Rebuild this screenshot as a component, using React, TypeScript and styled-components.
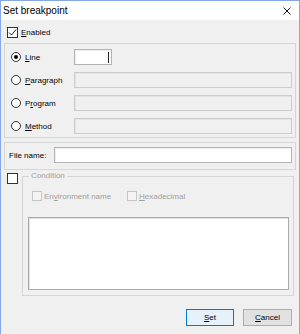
import styled, { createGlobalStyle } from 'styled-components'

const Global = createGlobalStyle`
  html, body {
    margin: 0;
    padding: 0;
    background: #f0f0f0;
  }
  body {
    font-family: "Liberation Sans", Arial, sans-serif;
    font-size: 8px;
    color: #000000;
  }
  * {
    box-sizing: border-box;
  }
`

const Window = styled.div`
  width: 300px;
  height: 334px;
  overflow: hidden;
  border: 1px solid #86a8e8;
  border-bottom: none;
  display: flex;
  flex-direction: column;
  background: #f0f0f0;
`

const TitleBar = styled.div`
  height: 19px;
  flex-shrink: 0;
  background: #ffffff;
  display: flex;
  align-items: center;
  justify-content: space-between;
  padding: 0 8px 0 2px;
  font-size: 10px;
`

const Client = styled.div`
  flex: 1;
  display: flex;
  flex-direction: column;
  padding: 7px 3px 0 3px;
`

const CheckRow = styled.label`
  display: flex;
  align-items: center;
  gap: 3px;
  height: 11px;
  padding-left: 3px;
`

const Box = styled.span<{ $size: number; $disabled?: boolean }>`
  width: ${(p) => p.$size}px;
  height: ${(p) => p.$size}px;
  flex-shrink: 0;
  border: 1px solid ${(p) => (p.$disabled ? '#c6c6c6' : '#333333')};
  background: ${(p) => (p.$disabled ? '#f4f4f4' : '#ffffff')};
  display: flex;
  align-items: center;
  justify-content: center;
`

const Group = styled.div`
  border: 1px solid #d5d5d5;
`

const RadioGroup = styled(Group)`
  margin-top: 5px;
  padding: 5px 3px 3px 6px;
  display: flex;
  flex-direction: column;
  gap: 7px;
`

const Row = styled.div`
  display: flex;
  align-items: center;
  height: 16px;
`

const RadioLabel = styled.label`
  width: 63px;
  flex-shrink: 0;
  display: flex;
  align-items: center;
  gap: 4px;
`

const Radio = styled.span<{ $on?: boolean }>`
  width: 10px;
  height: 10px;
  border-radius: 50%;
  border: 1px solid #333333;
  background: #ffffff;
  display: flex;
  align-items: center;
  justify-content: center;

  &::after {
    content: '';
    width: 4px;
    height: 4px;
    border-radius: 50%;
    background: ${(p) => (p.$on ? '#000000' : 'transparent')};
  }
`

const TextBox = styled.div<{ $width?: number; $disabled?: boolean }>`
  height: 16px;
  ${(p) => (p.$width ? `width: ${p.$width}px;` : 'flex: 1;')}
  border: 1px solid ${(p) => (p.$disabled ? '#cccccc' : '#b4b4b4')};
  box-shadow: inset 1px 1px 0 ${(p) => (p.$disabled ? '#e4e4e4' : '#eeeeee')};
  background: ${(p) => (p.$disabled ? '#f0f0f0' : '#ffffff')};
  display: flex;
  align-items: center;
  justify-content: flex-end;
  padding-right: 2px;
`

const Caret = styled.span`
  width: 1px;
  height: 11px;
  background: #222222;
`

const FileGroup = styled(Group)`
  margin-top: 4px;
  padding: 4px 3px 6px 4px;
  display: flex;
  align-items: center;
`

const FileLabel = styled.span`
  width: 45px;
  flex-shrink: 0;
`

const ConditionRow = styled.div`
  margin-top: 1px;
  display: flex;
  align-items: flex-start;
`

const ConditionCheck = styled.div`
  margin: 2px 4px 0 3px;
`

const Fieldset = styled.fieldset`
  flex: 1;
  margin: 0 2px 0 0;
  min-width: 0;
  height: 125px;
  border: 1px solid #d5d5d5;
  padding: 10px 4px 5px 5px;
  display: flex;
  flex-direction: column;
`

const Legend = styled.legend`
  margin-left: 1px;
  padding: 0 2px;
  line-height: 10px;
  color: #a0a0a0;
`

const Options = styled.div`
  display: flex;
  align-items: center;
  height: 10px;
  padding-left: 4px;
`

const Option = styled.label<{ $width?: number }>`
  display: flex;
  align-items: center;
  gap: 2px;
  color: #a0a0a0;
  ${(p) => (p.$width ? `width: ${p.$width}px;` : '')}
`

const TextArea = styled.div`
  margin-top: 16px;
  height: 73px;
  background: #ffffff;
  border: 1px solid #a9a9a9;
  box-shadow: inset 1px 1px 0 #e3e3e3;
`

const Buttons = styled.div`
  margin-top: 13px;
  display: flex;
  justify-content: flex-end;
  gap: 9px;
  padding-right: 4px;
`

const Button = styled.button<{ $default?: boolean; $width: number }>`
  width: ${(p) => p.$width}px;
  height: 17px;
  padding: 0;
  font-family: inherit;
  font-size: 8px;
  color: #000000;
  border: 1px solid ${(p) => (p.$default ? '#0078d7' : '#adadad')};
  background: ${(p) => (p.$default ? '#e5f1fb' : '#e1e1e1')};
`

const Check = () => (
  <svg width="9" height="9" viewBox="0 0 9 9">
    <polyline points="1,4.5 3.5,7 8,1.5" fill="none" stroke="#222" strokeWidth="1" />
  </svg>
)

const CloseIcon = () => (
  <svg width="8" height="8" viewBox="0 0 8 8">
    <path d="M0.5 0.5 L7.5 7.5 M7.5 0.5 L0.5 7.5" stroke="#111" strokeWidth="1" />
  </svg>
)

const radios = [
  { pre: '', key: 'L', rest: 'ine', on: true },
  { pre: '', key: 'P', rest: 'aragraph' },
  { pre: 'P', key: 'r', rest: 'ogram' },
  { pre: '', key: 'M', rest: 'ethod' },
]

export default function App() {
  return (
    <>
      <Global />
      <Window>
        <TitleBar>
          <span>Set breakpoint</span>
          <CloseIcon />
        </TitleBar>
        <Client>
          <CheckRow>
            <Box $size={11}>
              <Check />
            </Box>
            <span>
              <u>E</u>nabled
            </span>
          </CheckRow>

          <RadioGroup>
            {radios.map((r, i) => (
              <Row key={i}>
                <RadioLabel>
                  <Radio $on={r.on} />
                  <span>
                    {r.pre}
                    <u>{r.key}</u>
                    {r.rest}
                  </span>
                </RadioLabel>
                {r.on ? (
                  <TextBox $width={38}>
                    <Caret />
                  </TextBox>
                ) : (
                  <TextBox $disabled />
                )}
              </Row>
            ))}
          </RadioGroup>

          <FileGroup>
            <FileLabel>File name:</FileLabel>
            <TextBox />
          </FileGroup>

          <ConditionRow>
            <ConditionCheck>
              <Box $size={11} />
            </ConditionCheck>
            <Fieldset>
              <Legend>Condition</Legend>
              <Options>
                <Option $width={95}>
                  <Box $size={10} $disabled />
                  <span>
                    En<u>v</u>ironment name
                  </span>
                </Option>
                <Option>
                  <Box $size={10} $disabled />
                  <span>
                    <u>H</u>exadecimal
                  </span>
                </Option>
              </Options>
              <TextArea />
            </Fieldset>
          </ConditionRow>

          <Buttons>
            <Button $default $width={48}>
              <u>S</u>et
            </Button>
            <Button $width={49}>
              <u>C</u>ancel
            </Button>
          </Buttons>
        </Client>
      </Window>
    </>
  )
}
